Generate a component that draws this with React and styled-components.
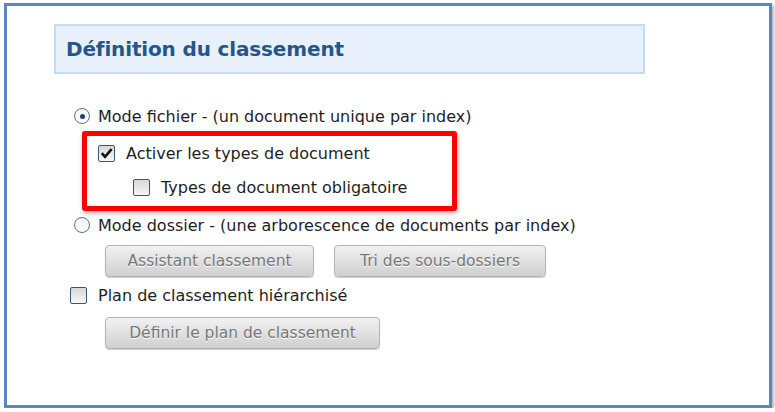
import React from "react";
import styled, { createGlobalStyle } from "styled-components";

const GlobalStyle = createGlobalStyle`
  html, body {
    margin: 0;
    padding: 0;
    background: #ffffff;
  }
  body {
    font-family: "DejaVu Sans", "Liberation Sans", sans-serif;
    color: #1e1e1e;
  }
`;

const Frame = styled.div`
  box-sizing: border-box;
  margin: 3px 0 0 4px;
  width: 768px;
  height: 405px;
  border: 3px solid #5a86c2;
  box-shadow: 2px 2px 3px rgba(0, 0, 0, 0.3);
  background: #fff;
  padding: 18px 0 0 47px;
  display: flex;
  flex-direction: column;
`;

const Header = styled.div`
  box-sizing: border-box;
  width: 591px;
  height: 50px;
  background: #e8f1fb;
  border: 2px solid #c3dcf6;
  display: flex;
  align-items: center;
  padding-left: 10px;
`;

const Title = styled.h2`
  margin: 0;
  font-size: 20px;
  font-weight: bold;
  color: #23578c;
  letter-spacing: -0.15px;
`;

const Options = styled.div`
  display: flex;
  flex-direction: column;
  margin-left: 16px;
  margin-top: 32px;
`;

const Row = styled.label`
  display: flex;
  align-items: center;
  height: 20px;
  font-size: 16px;
  margin-top: ${p => p.$top || 0}px;
  padding-left: ${p => p.$indent || 0}px;
`;

const Slot = styled.span`
  width: 28px;
  flex: none;
  display: flex;
  align-items: center;
`;

const Radio = styled.span`
  box-sizing: border-box;
  width: 16px;
  height: 16px;
  margin-left: 4px;
  border-radius: 50%;
  border: 1px solid #55708f;
  background: linear-gradient(#f4f4f4, #ffffff);
  display: flex;
  align-items: center;
  justify-content: center;
  &::after {
    content: "";
    width: 5px;
    height: 5px;
    border-radius: 50%;
    background: ${p => (p.$checked ? "#1e3f6e" : "transparent")};
  }
`;

const Check = styled.span`
  box-sizing: border-box;
  width: 17px;
  height: 17px;
  border: 1px solid #3f5670;
  border-radius: 2px;
  background: linear-gradient(#d8d8d8, #f6f6f6);
  display: flex;
  align-items: center;
  justify-content: center;
`;

const Highlight = styled.div`
  box-sizing: border-box;
  width: 375px;
  height: 80px;
  margin: 5px 0 0 12px;
  border: 5px solid #ff0000;
  border-radius: 3px;
  box-shadow: 1px 2px 4px rgba(0, 0, 0, 0.35);
  padding: 7px 0 0 11px;
  display: flex;
  flex-direction: column;
`;

const ButtonRow = styled.div`
  display: flex;
  gap: 20px;
  margin: ${p => p.$top}px 0 0 35px;
`;

const Button = styled.button`
  box-sizing: border-box;
  height: 32px;
  width: ${p => p.$w}px;
  font-family: "DejaVu Sans", "Liberation Sans", sans-serif;
  font-size: 15.5px;
  color: #777777;
  text-shadow: 0 1px 0 #ffffff;
  border: 1px solid #b5b5b5;
  border-radius: 4px;
  background: linear-gradient(#f2f2f2, #cfcfcf);
  box-shadow: 0 1px 1px rgba(0, 0, 0, 0.2);
  padding: 0;
`;

const CheckMark = () => (
  <svg width="13" height="13" viewBox="0 0 13 13">
    <path d="M1.8 6.2 L5 9.8 L11.6 2.2" fill="none" stroke="#111" strokeWidth="2.6" />
  </svg>
);

export default function App() {
  return (
    <>
      <GlobalStyle />
      <Frame>
        <Header>
          <Title>Définition du classement</Title>
        </Header>
        <Options>
          <Row>
            <Slot><Radio $checked /></Slot>
            Mode fichier - (un document unique par index)
          </Row>
          <Highlight>
            <Row>
              <Slot><Check><CheckMark /></Check></Slot>
              Activer les types de document
            </Row>
            <Row $top={14} $indent={35}>
              <Slot><Check /></Slot>
              Types de document obligatoire
            </Row>
          </Highlight>
          <Row $top={4}>
            <Slot><Radio /></Slot>
            Mode dossier - (une arborescence de documents par index)
          </Row>
          <ButtonRow $top={10}>
            <Button $w={209}>Assistant classement</Button>
            <Button $w={212}>Tri des sous-dossiers</Button>
          </ButtonRow>
          <Row $top={8}>
            <Slot><Check /></Slot>
            Plan de classement hiérarchisé
          </Row>
          <ButtonRow $top={12}>
            <Button $w={275}>Définir le plan de classement</Button>
          </ButtonRow>
        </Options>
      </Frame>
    </>
  );
}
